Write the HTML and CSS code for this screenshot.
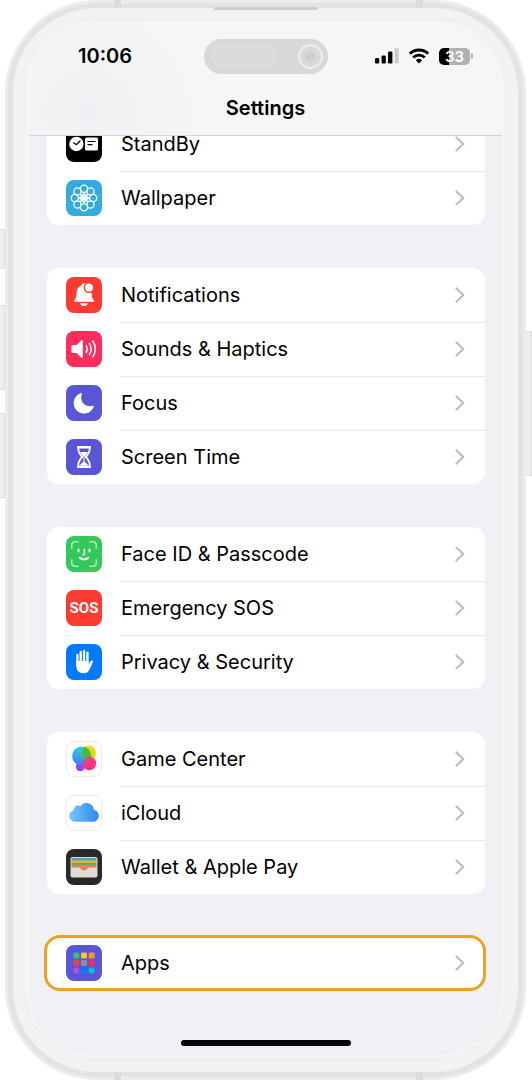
FILE: index.html
```html
<!DOCTYPE html>
<html lang="en">
<head>
<meta charset="utf-8">
<meta name="viewport" content="width=device-width, initial-scale=1">
<title>Settings</title>
<link rel="stylesheet" href="styles.css">
</head>
<body>
<svg class="defs" aria-hidden="true">
  <defs>
    <symbol id="chevron" viewBox="0 0 10 16"><path d="M1.5 1.5 8.3 8l-6.8 6.5" fill="none" stroke="#bdbdbf" stroke-width="2.2" stroke-linecap="round" stroke-linejoin="round"/></symbol>
    <linearGradient id="gc-blue" x1="0" y1="0" x2="0" y2="1"><stop offset="0" stop-color="#2fd0e8"/><stop offset="1" stop-color="#3d7cf5"/></linearGradient>
    <linearGradient id="gc-yellow" x1="0" y1="0" x2="0" y2="1"><stop offset="0" stop-color="#ffd60a"/><stop offset="1" stop-color="#c8e000"/></linearGradient>
    <linearGradient id="gc-pink" x1="0" y1="0" x2="0" y2="1"><stop offset="0" stop-color="#ff3d5e"/><stop offset="1" stop-color="#ff2d92"/></linearGradient>
    <linearGradient id="cloud" x1="0" y1="0" x2="1" y2="0"><stop offset="0" stop-color="#77c8f8"/><stop offset="1" stop-color="#2f86ee"/></linearGradient>
    <clipPath id="gc-clip"><circle cx="15.7" cy="15" r="9.6"/></clipPath>
    <clipPath id="wallet-clip"><rect x="4.5" y="8" width="27" height="20.5" rx="2"/></clipPath>
  </defs>
</svg>

<div class="phone">
  <span class="key key-action"></span>
  <span class="key key-up"></span>
  <span class="key key-down"></span>
  <span class="key key-power"></span>
  <span class="band band-tl"></span><span class="band band-tr"></span>
  <span class="band band-bl"></span><span class="band band-br"></span>
  <div class="bezel">
    <span class="speaker"></span>
    <div class="screen">
      <header class="header">
        <div class="status">
          <time class="clock">10:06</time>
          <div class="island"><span class="sensor"></span><span class="lens"></span></div>
          <div class="indicators">
            <svg width="24" height="16" viewBox="0 0 24 16" aria-label="Signal"><rect y="10" width="4.200" height="5.500" rx="1.200"/><rect x="6.600" y="7.500" width="4.200" height="8" rx="1.200"/><rect x="13" y="3.500" width="4.400" height="12" rx="1.200"/><rect x="19.600" y="0" width="4.200" height="15.500" rx="1.200" fill="#cdcdcd"/></svg>
            <svg width="20" height="16" viewBox="0 0 20 16" aria-label="Wi-Fi"><g fill="none" stroke="#000" stroke-width="2.800"><path d="M.9 5.700a13 13 0 0 1 18.200 0"/><path d="M4.200 9.400a8.300 8.300 0 0 1 11.600 0"/></g><path d="M6.900 12.300a4.500 4.500 0 0 1 6.200 0L10 15.600z"/></svg>
            <div class="battery"><span class="level">33</span><i class="tip"></i></div>
          </div>
        </div>
        <h1 class="title">Settings</h1>
      </header>

      <main class="content">
        <nav class="card card-first">
          <a class="row" href="#standby">
            <svg class="icon" viewBox="0 0 36 36"><rect width="36" height="36" rx="8"/><circle cx="10.4" cy="18" r="7.2" fill="#fff"/><path d="m7.4 16.4 3 2.3 4-4" fill="none" stroke="#000" stroke-width="1.3"/><rect x="19" y="11.5" width="13" height="13" rx="1.5" fill="#fff"/><path d="M21.5 15.5h8M21.5 18.7h5" stroke="#000" stroke-width="1.2"/></svg>
            <span class="label">StandBy</span><svg class="chevron"><use href="#chevron"/></svg>
          </a>
          <a class="row" href="#wallpaper">
            <svg class="icon" viewBox="0 0 36 36"><rect width="36" height="36" rx="8" fill="#34aadf"/><g fill="none" stroke="#fff" stroke-width="1.3"><circle cx="18" cy="8.8" r="3.6"/><circle cx="24.5" cy="11.5" r="3.6"/><circle cx="27.2" cy="18" r="3.6"/><circle cx="24.5" cy="24.5" r="3.6"/><circle cx="18" cy="27.2" r="3.6"/><circle cx="11.5" cy="24.5" r="3.6"/><circle cx="8.8" cy="18" r="3.6"/><circle cx="11.5" cy="11.5" r="3.6"/><path d="M18 12.4v11.2M12.4 18h11.2M14 14l8 8M22 14l-8 8"/><circle cx="18" cy="18" r="3.3"/></g></svg>
            <span class="label">Wallpaper</span><svg class="chevron"><use href="#chevron"/></svg>
          </a>
        </nav>

        <nav class="card">
          <a class="row" href="#notifications">
            <svg class="icon" viewBox="0 0 36 36"><rect width="36" height="36" rx="8" fill="#fe3b30"/><path fill="#fff" d="M8 24.800v-1.200c1.900-2 2.300-3.600 2.500-7.100.2-4.400 2-7.200 5-7.900.3-1.600 1.200-2.400 2.500-2.400 2 0 2.700 1 2.800 2.600l4.800 6c.1 4.600.6 6.800 2.400 8.800v1.200zM14.200 26.300h7.600c-.4 1.900-1.800 2.800-3.800 2.800s-3.400-.9-3.800-2.800z"/><circle cx="23" cy="10.600" r="4.800" fill="#fff" stroke="#fe3b30" stroke-width="1.300"/></svg>
            <span class="label">Notifications</span><svg class="chevron"><use href="#chevron"/></svg>
          </a>
          <a class="row" href="#sounds">
            <svg class="icon" viewBox="0 0 36 36"><rect width="36" height="36" rx="8" fill="#ff2d5b"/><path fill="#fff" d="M5.500 15.500q0-1.500 1.500-1.500h3.500l5-4.700q1.300-.8 1.300.7v16q0 1.500-1.300.7l-5-4.700H7q-1.500 0-1.500-1.500z"/><g fill="none" stroke="#fff" stroke-width="1.500" stroke-linecap="round"><path d="M20.200 14.600a6.600 6.600 0 0 1 0 6.800"/><path d="M23.400 12.300a11 11 0 0 1 0 11.400"/><path d="M26.900 10a15.500 15.500 0 0 1 0 16"/></g></svg>
            <span class="label">Sounds &amp; Haptics</span><svg class="chevron"><use href="#chevron"/></svg>
          </a>
          <a class="row" href="#focus">
            <svg class="icon" viewBox="0 0 36 36"><rect width="36" height="36" rx="8" fill="#5856d6"/><path fill="#fff" d="M14.800 8.200c.8-.3 1.400.2 1 1.100-2.600 6.800 3.200 13.500 10.900 11.500.9-.2 1.300.4 1 1.200A10.400 10.400 0 1 1 14.800 8.200z"/></svg>
            <span class="label">Focus</span><svg class="chevron"><use href="#chevron"/></svg>
          </a>
          <a class="row" href="#screen-time">
            <svg class="icon" viewBox="0 0 36 36"><rect width="36" height="36" rx="8" fill="#5856d6"/><path fill="none" stroke="#fff" stroke-width="1.800" stroke-linejoin="round" d="M12.300 8.200h11.400v1.600c0 3.600-1.500 5.800-4 8.200 2.500 2.400 4 4.600 4 8.200v1.600H12.300v-1.600c0-3.600 1.500-5.800 4-8.200-2.500-2.400-4-4.600-4-8.200z"/><path stroke="#fff" stroke-width="2.400" stroke-linecap="round" d="M12 8.300h12M12 27.800h12"/><path fill="#fff" d="M14 13h8q-1 2.300-3.500 4.400v5l4 4.100h-9l4-4.100v-5Q15 15.300 14 13z"/></svg>
            <span class="label">Screen Time</span><svg class="chevron"><use href="#chevron"/></svg>
          </a>
        </nav>

        <nav class="card">
          <a class="row" href="#face-id">
            <svg class="icon" viewBox="0 0 36 36"><rect width="36" height="36" rx="8" fill="#34c759"/><g fill="none" stroke="#fff" stroke-linecap="round"><path stroke="#b5ebc3" stroke-width="1.600" d="M5.700 12V9.200q0-3.500 3.500-3.500H12M24 5.700h2.800q3.500 0 3.500 3.500V12M30.300 24v2.800q0 3.500-3.500 3.500H24M12 30.300H9.200q-3.500 0-3.500-3.500V24"/><path stroke-width="2" d="M12.500 13.500v2M23.500 13.500v2M13.800 21.800q4.200 3.400 8.400 0"/><path stroke-width="1.500" d="M18.400 13.500v4q0 1.500-1.500 1.500"/></g></svg>
            <span class="label">Face ID &amp; Passcode</span><svg class="chevron"><use href="#chevron"/></svg>
          </a>
          <a class="row" href="#sos">
            <span class="icon sos" aria-hidden="true">SOS</span>
            <span class="label">Emergency SOS</span><svg class="chevron"><use href="#chevron"/></svg>
          </a>
          <a class="row" href="#privacy">
            <svg class="icon" viewBox="0 0 36 36"><rect width="36" height="36" rx="8" fill="#007aff"/><g stroke="#fff" stroke-width="2.300" stroke-linecap="round" fill="none"><path d="M11.400 11v10M14.700 8v12M18.100 7v12M21.500 8.600V20M25.700 17.500 23 23"/></g><path fill="#fff" d="M10.250 17h12.400v4l2.200-3.500 1.900.8-3 6.700q-1.800 4.300-6.300 4.300-7.200 0-7.200-7.300z"/></svg>
            <span class="label">Privacy &amp; Security</span><svg class="chevron"><use href="#chevron"/></svg>
          </a>
        </nav>

        <nav class="card">
          <a class="row" href="#game-center">
            <svg class="icon" viewBox="0 0 36 36"><rect x=".5" y=".5" width="35" height="35" rx="7.500" fill="#fff" stroke="#ececee"/><circle cx="14.300" cy="25.700" r="4.500" fill="#9a45f2"/><circle cx="15.700" cy="15" r="9.600" fill="url(#gc-blue)"/><circle cx="22.500" cy="12" r="7.400" fill="url(#gc-yellow)"/><circle cx="22.500" cy="12" r="7.400" fill="#42bd4c" clip-path="url(#gc-clip)"/><circle cx="23.300" cy="22.300" r="6.900" fill="url(#gc-pink)"/><circle cx="23.300" cy="22.300" r="6.900" fill="#b257a5" opacity=".65" clip-path="url(#gc-clip)"/></svg>
            <span class="label">Game Center</span><svg class="chevron"><use href="#chevron"/></svg>
          </a>
          <a class="row" href="#icloud">
            <svg class="icon" viewBox="0 0 36 36"><rect x=".5" y=".5" width="35" height="35" rx="7.500" fill="#fff" stroke="#ececee"/><path fill="url(#cloud)" d="M9.500 26.700C5.600 26.700 3.200 24 3.200 20.800c0-3 1.900-5 4.500-5.600.1-3 2.200-4.700 4.500-4.600.9 0 1.600.2 2.300.6A7.300 7.300 0 0 1 27.800 15c3.200.3 4.900 3 4.900 5.700 0 3.400-2.300 6-5.600 6z"/></svg>
            <span class="label">iCloud</span><svg class="chevron"><use href="#chevron"/></svg>
          </a>
          <a class="row" href="#wallet">
            <svg class="icon" viewBox="0 0 36 36"><rect width="36" height="36" rx="8" fill="#29292a"/><g clip-path="url(#wallet-clip)"><path fill="#dedcd3" d="M4 8h28v21H4z"/><path fill="#4b9fc8" d="M5.500 9h25v3h-25z"/><path fill="#f3b62d" d="M5.500 11.500h25V14h-25z"/><path fill="#62ad4e" d="M5.500 13.800h25v2.700h-25z"/><path fill="#ec7864" d="M5.500 16.300h25V18.500h-8.500q-1.200 3-4 3t-4-3H5.500z"/></g></svg>
            <span class="label">Wallet &amp; Apple Pay</span><svg class="chevron"><use href="#chevron"/></svg>
          </a>
        </nav>

        <nav class="card card-active">
          <a class="row" href="#apps">
            <svg class="icon" viewBox="0 0 36 36"><rect width="36" height="36" rx="8" fill="#5856d6"/><rect x="7.300" y="7.500" width="6" height="6" rx="1.200" fill="#34c17a"/><rect x="15" y="7.500" width="6" height="6" rx="1.200" fill="#ffc61a"/><rect x="22.700" y="7.500" width="6" height="6" rx="1.200" fill="#ff9520"/><rect x="7.300" y="15" width="6" height="6" rx="2.400" fill="#fa3f3b"/><rect x="15" y="15" width="6" height="6" rx="1.200" fill="#8e8e98"/><rect x="22.700" y="15" width="6" height="6" rx="2.400" fill="#f92d60"/><rect x="7.300" y="22.500" width="6" height="6" rx="2.400" fill="#af52ea"/><rect x="15" y="22.500" width="6" height="6" rx="2" fill="#087cff"/><rect x="22.700" y="22.500" width="6" height="6" rx="2" fill="#0dbec4"/></svg>
            <span class="label">Apps</span><svg class="chevron"><use href="#chevron"/></svg>
          </a>
        </nav>
      </main>
      <div class="home"></div>
    </div>
  </div>
</div>
</body>
</html>
```
FILE: styles.css
```css
* { box-sizing: border-box; }

body {
  margin: 0;
  background: #fff;
  color: #000;
  font-family: Inter, "Liberation Sans", sans-serif;
  overflow-x: hidden;
}

.defs { position: absolute; width: 0; height: 0; }

.phone {
  position: relative;
  display: flex;
  min-height: 100vh;
  margin: 0 6px 0 5px;
  padding: 5px;
  border: 3px solid #ececec;
  border-radius: 92px;
  background: #e3e3e3;
}

.bezel {
  position: relative;
  flex: 1;
  display: flex;
  min-width: 0;
  padding: 13px 14px 15px;
  border-radius: 84px;
  background: #f2f2f2;
}

.screen {
  flex: 1;
  display: flex;
  flex-direction: column;
  min-width: 0;
  overflow: hidden;
  border: 2px solid #f6f6f8;
  border-radius: 66px;
  background: #f0f0f5;
}

/* Hardware details on the frame */
.key {
  position: absolute;
  left: -8px;
  width: 5px;
  border: 1px solid #dedede;
  border-left: 0;
  background: #eeeeee;
}
.key-action { top: 226px; height: 40px; }
.key-up { top: 302px; height: 85px; }
.key-down { top: 410px; height: 85px; }
.key-power {
  left: auto;
  right: -9px;
  top: 328px;
  width: 6px;
  height: 145px;
}

.band {
  position: absolute;
  width: 7px;
  height: 8px;
  background: #dcdcdc;
}
.band-tl { left: 106px; top: -3px; }
.band-tr { right: 100px; top: -3px; }
.band-bl { left: 106px; bottom: -3px; }
.band-br { right: 100px; bottom: -3px; }

.speaker {
  position: absolute;
  top: -1px;
  left: 50%;
  width: 104px;
  height: 3px;
  margin-left: -52px;
  border-radius: 2px;
  background: #cdcdcd;
}

/* Header */
.header {
  display: flex;
  flex-direction: column;
  flex: none;
  height: 113px;
  border-bottom: 1px solid #d4d4d6;
  background: radial-gradient(circle at 60px 90px, #eff0f3 0, #f6f6f6 110px);
}

.status {
  display: grid;
  grid-template-columns: 1fr auto 1fr;
  align-items: center;
  height: 36px;
  margin-top: 15px;
}

.clock {
  padding-left: 49px;
  font-size: 20px;
  line-height: 24px;
  font-weight: 600;
}

.island {
  display: flex;
  align-items: center;
  justify-content: space-between;
  width: 124px;
  height: 35px;
  padding: 0 5px 0 7px;
  border-radius: 18px;
  background: #d8d8d8;
}
.sensor {
  width: 67px;
  height: 24px;
  border: 1px solid #dedede;
  border-radius: 12px;
  background: #dbdbdb;
}
.lens {
  width: 25px;
  height: 25px;
  border: 2px solid #ededed;
  border-radius: 50%;
  background: radial-gradient(circle, #cfcfcf 0 4px, #d8d8d8 6px, #dcdcdc 100%);
}

.indicators {
  display: flex;
  align-items: center;
  justify-content: flex-end;
  gap: 10px;
  padding-right: 29px;
}
.indicators svg { flex: none; }

.battery { display: flex; align-items: center; gap: 1px; }
.level {
  width: 31px;
  height: 17px;
  border-radius: 5px;
  background: linear-gradient(90deg, #000 10px, #b1b1b1 10px);
  color: #fff;
  font-size: 15px;
  line-height: 17px;
  font-weight: 600;
  text-align: center;
}
.tip {
  width: 2px;
  height: 6px;
  border-radius: 0 2px 2px 0;
  background: #b1b1b1;
}

.title {
  margin: 21px 0 0;
  font-size: 20px;
  line-height: 26px;
  font-weight: 600;
  text-align: center;
}

/* Settings list */
.content {
  flex: 1;
  display: flex;
  flex-direction: column;
  gap: 43px;
  overflow: hidden;
  padding: 0 17px 0 18px;
}

.card {
  flex: none;
  overflow: hidden;
  border-radius: 12px;
  background: #fff;
}
.card-first { margin-top: -19px; }
.card-active {
  margin: -2px -1px 0 -3px;
  border: 3px solid #f0a020;
  border-radius: 16px;
}
.card-active .row { height: 50px; padding-right: 18px; }

.row {
  position: relative;
  display: flex;
  align-items: center;
  gap: 19px;
  height: 54px;
  padding: 0 20px 0 19px;
  color: inherit;
  text-decoration: none;
}
.row + .row::before {
  content: "";
  position: absolute;
  top: 0;
  left: 73px;
  right: 0;
  height: 1px;
  background: #e9e9eb;
}

.icon { width: 36px; height: 36px; flex: none; }
.sos {
  border-radius: 8px;
  background: #fe3b30;
  color: #fff;
  font-family: Roboto, sans-serif;
  font-size: 15px;
  line-height: 36px;
  font-weight: 700;
  text-align: center;
}

.label {
  flex: 1;
  font-size: 20px;
  line-height: 26px;
  white-space: nowrap;
}

.chevron { width: 10px; height: 16px; flex: none; }

.home {
  width: 170px;
  height: 6px;
  margin: 0 auto 9px;
  flex: none;
  border-radius: 3px;
  background: #000;
}
```
